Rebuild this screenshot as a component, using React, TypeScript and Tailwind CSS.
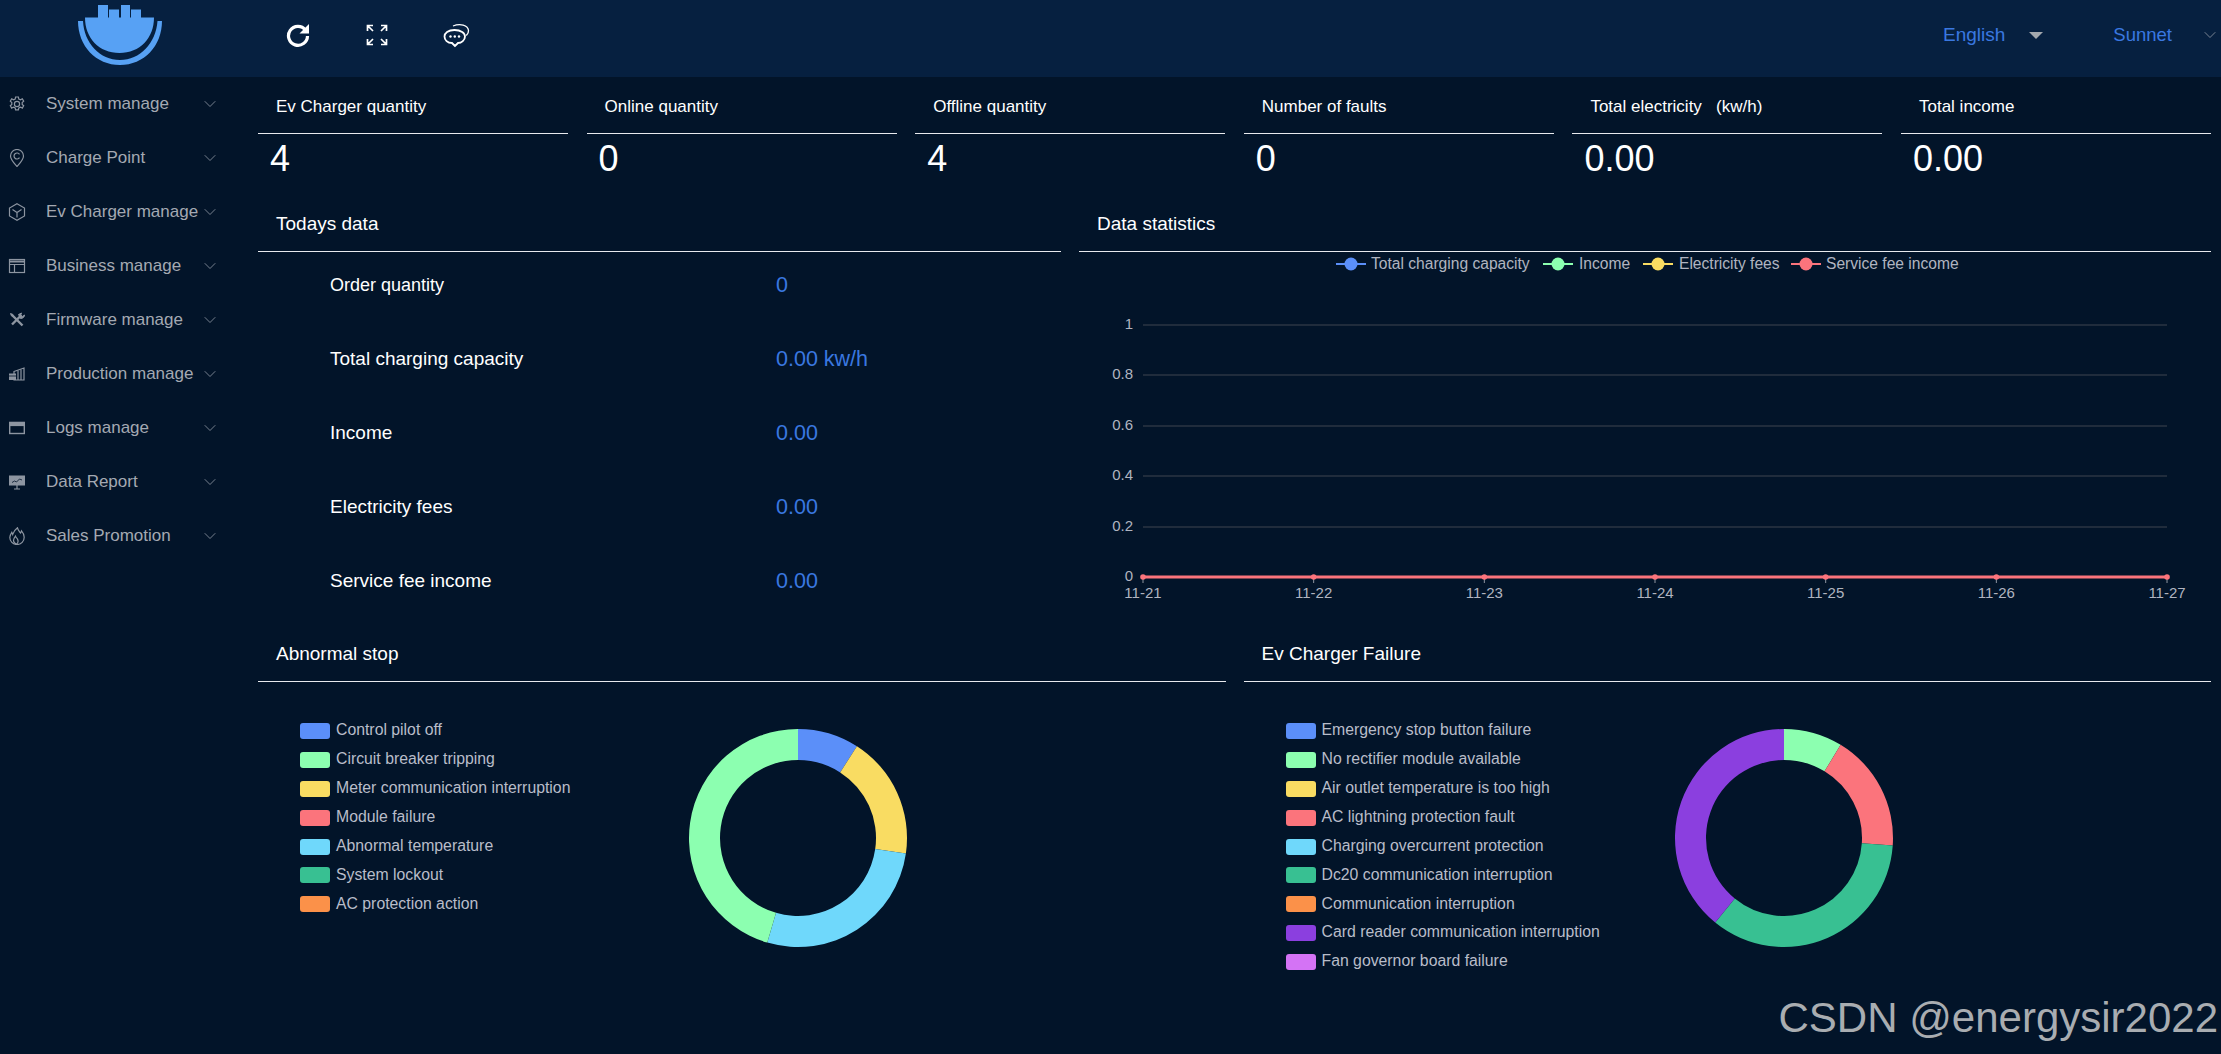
import { ChevronDown } from "lucide-react";

const font = "[font-family:'Liberation_Sans',Arial,sans-serif]";

const menu = [
  { label: "System manage", icon: "gear" },
  { label: "Charge Point", icon: "pin" },
  { label: "Ev Charger manage", icon: "box" },
  { label: "Business manage", icon: "table" },
  { label: "Firmware manage", icon: "tools" },
  { label: "Production manage", icon: "factory" },
  { label: "Logs manage", icon: "window" },
  { label: "Data Report", icon: "board" },
  { label: "Sales Promotion", icon: "fire" },
];

const stats = [
  { title: "Ev Charger quantity", value: "4" },
  { title: "Online quantity", value: "0" },
  { title: "Offline quantity", value: "4" },
  { title: "Number of faults", value: "0" },
  { title: "Total electricity\u00a0\u00a0\u00a0(kw/h)", value: "0.00" },
  { title: "Total income", value: "0.00" },
];

const today = [
  { label: "Order quantity", value: "0", size: "text-[18px]" },
  { label: "Total charging capacity", value: "0.00 kw/h", size: "text-[19px]" },
  { label: "Income", value: "0.00", size: "text-[19px]" },
  { label: "Electricity fees", value: "0.00", size: "text-[19px]" },
  { label: "Service fee income", value: "0.00", size: "text-[19px]" },
];

const abnormal = [
  { name: "Control pilot off", color: "#5b8ff9" },
  { name: "Circuit breaker tripping", color: "#8cffb0" },
  { name: "Meter communication interruption", color: "#f9dc62" },
  { name: "Module failure", color: "#fb747c" },
  { name: "Abnormal temperature", color: "#6fd8fb" },
  { name: "System lockout", color: "#38c092" },
  { name: "AC protection action", color: "#fb9149" },
];

const abnormalSlices = [
  { color: "#5b8ff9", value: 1 },
  { color: "#f9dc62", value: 2 },
  { color: "#6fd8fb", value: 3 },
  { color: "#8cffb0", value: 5 },
];

const failure = [
  { name: "Emergency stop button failure", color: "#5b8ff9" },
  { name: "No rectifier module available", color: "#8cffb0" },
  { name: "Air outlet temperature is too high", color: "#f9dc62" },
  { name: "AC lightning protection fault", color: "#fb747c" },
  { name: "Charging overcurrent protection", color: "#6fd8fb" },
  { name: "Dc20 communication interruption", color: "#38c092" },
  { name: "Communication interruption", color: "#fb9149" },
  { name: "Card reader communication interruption", color: "#8b3fdf" },
  { name: "Fan governor board failure", color: "#d473f5" },
];

const failureSlices = [
  { color: "#8cffb0", value: 2 },
  { color: "#fb747c", value: 4 },
  { color: "#38c092", value: 8 },
  { color: "#8b3fdf", value: 9 },
];

const series = [
  { name: "Total charging capacity", color: "#5b8ff9", x: 1336, tx: 1371 },
  { name: "Income", color: "#8cffb0", x: 1543, tx: 1579 },
  { name: "Electricity fees", color: "#f9dc62", x: 1643, tx: 1679 },
  { name: "Service fee income", color: "#fb747c", x: 1791, tx: 1826 },
];

const yTicks = [
  { label: "1", y: 325 },
  { label: "0.8", y: 375 },
  { label: "0.6", y: 426 },
  { label: "0.4", y: 476 },
  { label: "0.2", y: 527 },
];

const days = ["11-21", "11-22", "11-23", "11-24", "11-25", "11-26", "11-27"];

function MenuIcon({ name }: { name: string }) {
  const common = {
    width: 18,
    height: 18,
    viewBox: "0 0 18 18",
    fill: "none",
    stroke: "#8d95a1",
    strokeWidth: 1.2,
  };
  if (name === "gear")
    return (
      <svg {...common}>
        <circle cx="9" cy="9" r="2.6" />
        <path d="M7.6 2h2.8l.4 2 1.7.8 1.8-1 1.4 2.4-1.5 1.3v1.9l1.5 1.3-1.4 2.4-1.8-1-1.7.8-.4 2H7.6l-.4-2-1.7-.8-1.8 1-1.4-2.4 1.5-1.3V7.5L2.3 6.2l1.4-2.4 1.8 1 1.7-.8z" />
      </svg>
    );
  if (name === "pin")
    return (
      <svg {...common}>
        <path d="M9 17.500C5.500 13.500 2.500 10.600 2.500 7a6.500 6.500 0 0 1 13 0c0 3.600-3 6.500-6.500 10.500z" />
        <path d="M11.500 5.300A3 3 0 1 0 11.500 8.700" />
      </svg>
    );
  if (name === "box")
    return (
      <svg {...common}>
        <path d="M9 .8l7.500 4.200v8L9 17.200 1.500 13V5z" />
        <path d="M4.500 6.500L9 9.500l4.500-3M9 9.500v5" />
      </svg>
    );
  if (name === "table")
    return (
      <svg {...common}>
        <rect x="1.500" y="2.500" width="15" height="13" />
        <path d="M1.500 4.500h15" strokeWidth="2" />
        <path d="M1.500 7.500h15M6.500 7.500v8" />
      </svg>
    );
  if (name === "tools")
    return (
      <svg {...common} strokeWidth="2.400">
        <path d="M4.500 4.500l10 10" />
        <path d="M13.500 4L4 13.500" />
        <path d="M2.500 2.500l2.500 1v1.500H3.500z" fill="#8d95a1" strokeWidth="1" />
        <path d="M10.500 3.500l3-1.500-1 2.500 2 1 2-1.500c0 2-1.500 3.500-4 3.500z" fill="#8d95a1" strokeWidth="1" />
      </svg>
    );
  if (name === "factory")
    return (
      <svg {...common}>
        <path d="M6 6.500l10-3.500v12H6z" />
        <path d="M10 5.500V15M13 4.500V15" />
        <path d="M1 8.500h7v6.500H1z" fill="#8d95a1" stroke="none" />
        <path d="M1 11h7" stroke="#021429" strokeWidth="0.800" />
      </svg>
    );
  if (name === "window")
    return (
      <svg {...common}>
        <rect x="1.700" y="3.500" width="14.600" height="11" strokeWidth="1.400" />
        <rect x="1.700" y="3.500" width="14.600" height="3" fill="#8d95a1" />
      </svg>
    );
  if (name === "board")
    return (
      <svg {...common}>
        <rect x="1" y="2.500" width="16" height="10" fill="#8d95a1" stroke="none" />
        <path d="M4 9.500l2.500-1.500 2 1 3-3 2.500 1" stroke="#021429" strokeWidth="0.800" />
        <path d="M9 12v4M6 16h6" />
      </svg>
    );
  return (
    <svg {...common}>
      <path d="M9.500 .8c.5 2.500 2 3.700 3 5.200.5-.6.8-1.300 1-2.200 1.800 2 2.700 4.200 2.700 6.400 0 4-3 7.300-7.200 7.300S1.800 14.300 1.800 10.600c0-2.200 1-3.800 2-5.300l.9 2.100c.8-2.800 2.700-5 4.800-6.600z" />
      <path d="M8.500 17.200c-2-.7-3-2.300-3-4 0-1.600 1-2.800 2-4.100.3 1.400 1.200 1.700 2 3 .8 1.500.5 3.800-1 5.100z" />
    </svg>
  );
}

function Logo() {
  return (
    <svg width="120" height="77" viewBox="60 0 120 77" className="block">
      <path d="M85 17.500H98V5h10v12.500h1V9.500h10v8h2V5h9v12.500h1V9.500h10v8h13c0 20.500-14 35.500-34.500 35.500S85 38 85 17.500z" fill="#57a1f4" />
      <path d="M78 21h5c1 22 17 39 37 39s36-17 37.500-39h4.500c0 25-18 44-42 44S78 46 78 21z" fill="#57a1f4" />
    </svg>
  );
}

function HeaderIcons() {
  return (
    <div className="-mt-[7px] flex items-center gap-[55px] pl-[40px]">
      <svg width="26" height="26" viewBox="0 0 26 26" fill="none" stroke="#fff" strokeWidth="3.200">
        <path d="M20.500 8A9.500 9.500 0 1 0 22.500 14" />
        <path d="M24 2v9.500h-9.500z" fill="#fff" stroke="none" />
      </svg>
      <svg width="22" height="22" viewBox="0 0 22 22" fill="none" stroke="#fff" strokeWidth="1.700">
        <path d="M1.500 7V1.500H7M1.500 1.500L7 7M20.500 7V1.500H15M20.500 1.500L15 7M1.500 15v5.500H7M1.500 20.500L7 15M20.500 15v5.500H15M20.500 20.500L15 15" />
      </svg>
      <svg width="27" height="25" viewBox="0 0 27 25" fill="none" stroke="#fff" strokeWidth="1.800">
        <path d="M12 23l-3-3C4.500 20 1.500 17 1.500 13.500S5 7 11.500 7 22 10 22 13.500 18.500 20 15 20z" />
        <path d="M10 3c7-3 15-1 15.500 4.500.2 2-.7 3.500-2.200 5" strokeWidth="1.300" />
        <circle cx="7.500" cy="13.500" r="1.200" fill="#fff" stroke="none" />
        <circle cx="11.800" cy="13.500" r="1.200" fill="#fff" stroke="none" />
        <circle cx="16" cy="13.500" r="1.200" fill="#fff" stroke="none" />
      </svg>
    </div>
  );
}

function Donut({ items }: { items: { color: string; value: number }[] }) {
  const total = items.reduce((sum, item) => sum + item.value, 0);
  let start = 0;
  const point = (r: number, deg: number) => {
    const a = (deg * Math.PI) / 180;
    return `${110 + r * Math.sin(a)} ${110 - r * Math.cos(a)}`;
  };
  return (
    <svg width="220" height="220" viewBox="0 0 220 220" className="mt-[5px] block">
      {items.map((item) => {
        const end = start + (item.value / total) * 360;
        const large = end - start > 180 ? 1 : 0;
        const d = `M${point(109, start)}A109 109 0 ${large} 1 ${point(109, end)}L${point(78, end)}A78 78 0 ${large} 0 ${point(78, start)}Z`;
        start = end;
        return <path key={item.color} d={d} fill={item.color} />;
      })}
    </svg>
  );
}

function Legend({ items }: { items: { name: string; color: string }[] }) {
  return (
    <ul className="flex w-[388px] flex-col gap-[12.900px]">
      {items.map((item) => (
        <li key={item.name} className="flex h-[16px] items-center gap-[6px] whitespace-nowrap text-[15.800px] text-[#b9bdc9]">
          <span className="h-[16px] w-[30px] rounded-[3px]" style={{ background: item.color }} />
          <span className="pb-[2px]">{item.name}</span>
        </li>
      ))}
    </ul>
  );
}

function SectionTitle({ children }: { children: string }) {
  return (
    <div className="flex h-[55px] items-center border-b border-[#e8eaee] pl-[18px] text-[19px] text-white">
      {children}
    </div>
  );
}

function TrendChart() {
  return (
    <svg width="1132" height="375" viewBox="1079 252 1132 375" className="block">
      {series.map((s) => (
        <g key={s.name}>
          <line x1={s.x} x2={s.x + 30} y1="264" y2="264" stroke={s.color} strokeWidth="2" />
          <circle cx={s.x + 15} cy="264" r="6.500" fill={s.color} />
          <text x={s.tx} y="269" fontSize="15.600" fill="#b0b4c0">{s.name}</text>
        </g>
      ))}
      {yTicks.map((t) => (
        <g key={t.label}>
          <line x1="1143" x2="2167" y1={t.y} y2={t.y} stroke="#3f4450" strokeWidth="1" />
          <text x="1133" y={t.y + 4} fontSize="15" fill="#b0b4c0" textAnchor="end">{t.label}</text>
        </g>
      ))}
      <text x="1133" y="581" fontSize="15" fill="#b0b4c0" textAnchor="end">0</text>
      <line x1="1143" x2="2167" y1="577" y2="577" stroke="#fb747c" strokeWidth="3" />
      {days.map((d, i) => {
        const x = 1143 + i * 170.67;
        return (
          <g key={d}>
            <line x1={x} x2={x} y1="577" y2="583" stroke="#8f95a1" strokeWidth="1" />
            <circle cx={x} cy="577" r="2.800" fill="#fb747c" />
            <text x={x} y="598" fontSize="15" fill="#b0b4c0" textAnchor="middle">{d}</text>
          </g>
        );
      })}
    </svg>
  );
}

export default function App() {
  return (
    <div className={`relative flex h-[1054px] w-[2221px] flex-col overflow-hidden bg-[#021429] ${font}`}>
      <header className="flex h-[77px] shrink-0 items-center bg-[#062040]">
        <div className="h-full w-[245px] overflow-hidden pl-[60px]">
          <Logo />
        </div>
        <HeaderIcons />
        <div className="-mt-[7px] ml-auto flex items-center text-[#3a78e0]">
          <span className="text-[19px]">English</span>
          <span className="ml-[24px] h-0 w-0 border-x-[7px] border-t-[7px] border-x-transparent border-t-[#a3a8ae]" />
          <span className="ml-[70px] text-[18.500px]">Sunnet</span>
          <ChevronDown size={20} strokeWidth={1} className="ml-[28px] mr-[1px] text-[#8d95a1]" />
        </div>
      </header>

      <div className="flex flex-1">
        <aside className="w-[245px] shrink-0">
          {menu.map((item) => (
            <div key={item.label} className="flex h-[54px] items-center pl-[8px] pr-[25px] text-[17px] text-[#a4a9b2]">
              <MenuIcon name={item.icon} />
              <span className="ml-[20px] whitespace-nowrap">{item.label}</span>
              <ChevronDown size={20} strokeWidth={1} className="ml-auto text-[#8d95a1]" />
            </div>
          ))}
        </aside>

        <main className="flex-1 pl-[13px] pr-[10px]">
          <div className="grid h-[120px] grid-cols-6 gap-x-[18.600px]">
            {stats.map((s) => (
              <div key={s.title}>
                <div className="flex h-[57px] items-center whitespace-pre border-b border-[#e8eaee] pl-[18px] pt-[3px] text-[17px] text-white">
                  {s.title}
                </div>
                <div className="pl-[12px] pt-[3px] text-[36px] leading-[44px] text-white">{s.value}</div>
              </div>
            ))}
          </div>

          <div className="grid h-[430px] grid-cols-[803px_1fr] gap-x-[18px]">
            <section>
              <SectionTitle>Todays data</SectionTitle>
              <div className="-mt-[4px]">
                {today.map((row) => (
                  <div key={row.label} className={`flex h-[74px] items-center pl-[72px] ${row.size}`}>
                    <span className="w-[446px] text-white">{row.label}</span>
                    <span className="text-[21.500px] text-[#3a78e0]">{row.value}</span>
                  </div>
                ))}
              </div>
            </section>
            <section>
              <SectionTitle>Data statistics</SectionTitle>
              <TrendChart />
            </section>
          </div>

          <div className="grid grid-cols-2 gap-x-[18px]">
            <section>
              <SectionTitle>Abnormal stop</SectionTitle>
              <div className="flex items-start pl-[42px] pt-[41px]">
                <Legend items={abnormal} />
                <Donut items={abnormalSlices} />
              </div>
            </section>
            <section>
              <SectionTitle>Ev Charger Failure</SectionTitle>
              <div className="flex items-start pl-[42px] pt-[41px]">
                <Legend items={failure} />
                <Donut items={failureSlices} />
              </div>
            </section>
          </div>
        </main>
      </div>

      <div className="absolute bottom-[15px] right-[3px] text-[42px] leading-none text-[#a9adb1]">CSDN @energysir2022</div>
    </div>
  );
}
